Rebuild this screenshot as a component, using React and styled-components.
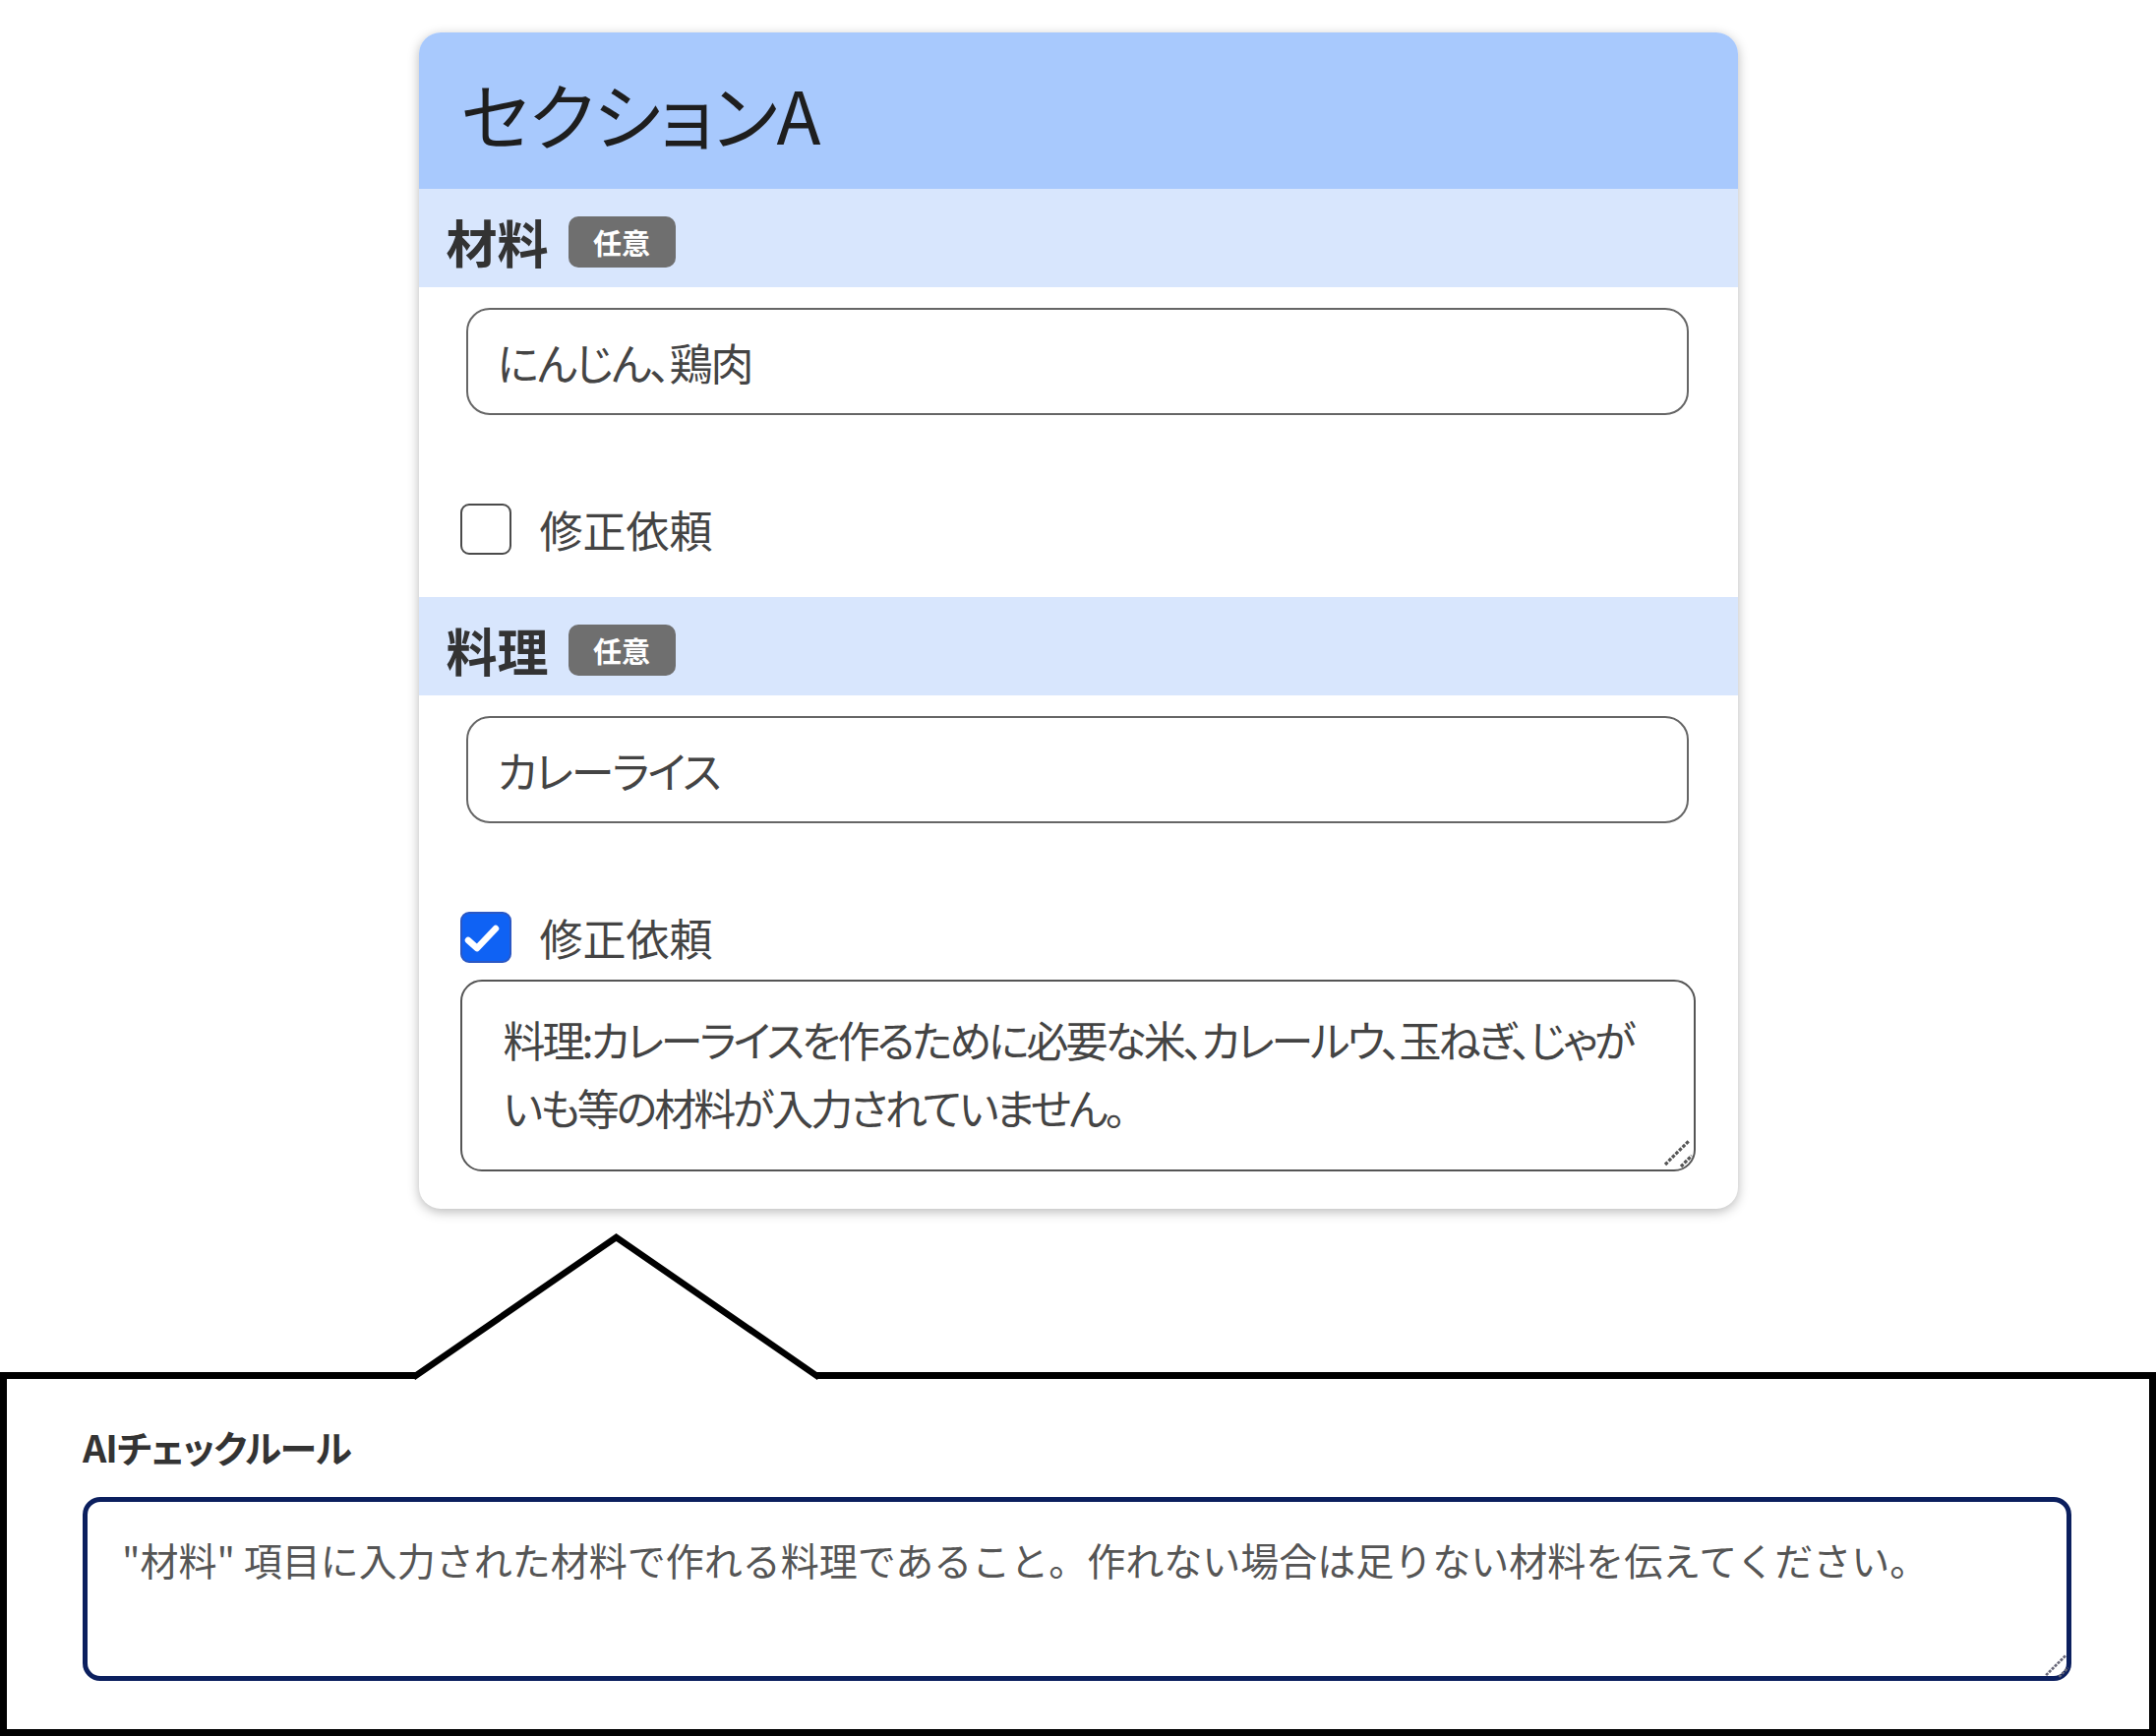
import React, { useState } from "react";
import styled, { createGlobalStyle } from "styled-components";

const GlobalStyle = createGlobalStyle`
  html, body { margin: 0; padding: 0; background: #fff; }
  body {
    font-family: "Noto Sans CJK JP", "Noto Sans", sans-serif;
    color: #333;
    font-feature-settings: "palt";
  }
  *, *::before, *::after { box-sizing: border-box; }
`;

const Page = styled.main`
  width: 2192px;
  min-height: 1765px;
  padding-top: 33px;
  display: flex;
  flex-direction: column;
  align-items: center;
`;

const Card = styled.section`
  width: 1341px;
  background: #fff;
  border-radius: 22px;
  box-shadow: 0 3px 12px rgba(0, 0, 0, 0.28);
  overflow: hidden;
`;

const CardHeader = styled.header`
  height: 159px;
  background: #a8c9fd;
  display: flex;
  align-items: center;
  padding: 4px 0 0 43px;
`;

const Title = styled.h2`
  margin: 0;
  font-size: 74px;
  font-weight: 400;
  color: #1e1e1e;
  line-height: 1;
  letter-spacing: -1px;
`;

const LabelBar = styled.div`
  height: 100px;
  background: #d8e6fd;
  display: flex;
  align-items: center;
  gap: 20px;
  padding: 8px 0 0 28px;
`;

const FieldLabel = styled.span`
  font-size: 52px;
  font-weight: 700;
  color: #333;
  line-height: 1;
`;

const Badge = styled.span`
  display: inline-flex;
  align-items: center;
  justify-content: center;
  height: 52px;
  width: 109px;
  border-radius: 10px;
  background: #6f6f6f;
  color: #fff;
  font-size: 29px;
  font-weight: 700;
  line-height: 1;
`;

const FieldBody = styled.div`
  display: flex;
  flex-direction: column;
  padding: 21px 43px 38px 42px;
`;

const TextInput = styled.input`
  height: 109px;
  margin: 0 7px 0 6px;
  border: 2.5px solid #666;
  border-radius: 24px;
  padding: 0 30px;
  font-family: inherit;
  font-feature-settings: "palt";
  font-size: 44px;
  letter-spacing: -2px;
  color: #444;
  background: #fff;
  outline: none;
`;

const CheckRow = styled.label`
  display: flex;
  align-items: center;
  gap: 29px;
  height: 62px;
  margin-top: 85px;
  font-size: 44px;
  color: #444;
  cursor: pointer;
  user-select: none;
`;

const HiddenInput = styled.input`
  position: absolute;
  opacity: 0;
  width: 0;
  height: 0;
  margin: 0;
`;

const Box = styled.span`
  flex: none;
  width: 52px;
  height: 52px;
  border-radius: 9px;
  border: 2.5px solid ${(p) => (p.$checked ? "#2b58c4" : "#4a4a4a")};
  background: ${(p) => (p.$checked ? "#0f62f4" : "#fff")};
  display: inline-flex;
  align-items: center;
  justify-content: center;
`;

const AreaWrap = styled.div`
  position: relative;
  display: flex;
  margin-top: ${(p) => p.$top || 0}px;
`;

const Grip = styled.svg`
  position: absolute;
  right: 0;
  bottom: 0;
  pointer-events: none;
`;

const NoteArea = styled.textarea`
  height: 195px;
  width: 100%;
  border: 2.5px solid #555;
  border-radius: 22px;
  padding: 24px 60px 0 42px;
  font-family: inherit;
  font-feature-settings: "palt";
  font-size: 43px;
  letter-spacing: -3px;
  line-height: 69px;
  color: #444;
  background: #fff;
  resize: none;
  outline: none;
`;

const Callout = styled.section`
  position: relative;
  align-self: stretch;
  margin-top: 166px;
  border: 7px solid #000;
  padding: 41px 79px 49px 77px;
  background: #fff;
  display: flex;
  flex-direction: column;
  gap: 23px;
`;

const Pointer = styled.svg`
  position: absolute;
  left: 403px;
  top: -152px;
  overflow: visible;
`;

const RuleLabel = styled.div`
  font-size: 38px;
  font-weight: 700;
  color: #333;
  line-height: 56px;
  letter-spacing: -1px;
`;

const RuleArea = styled.textarea`
  height: 187px;
  width: 100%;
  border: 5px solid #0b1f5e;
  border-radius: 18px;
  padding: 30px 35px 0 35px;
  font-family: inherit;
  font-feature-settings: normal;
  font-size: 39px;
  line-height: 57px;
  color: #555;
  background: #fff;
  resize: none;
  outline: none;
`;

function CheckIcon() {
  return (
    <svg width="52" height="52" viewBox="0 0 52 52" style={{ marginLeft: -5, marginTop: -5 }}>
      <polyline
        points="11,31 20,39 39,19"
        fill="none"
        stroke="#fff"
        strokeWidth="6.5"
        strokeLinecap="round"
        strokeLinejoin="round"
      />
    </svg>
  );
}

function ResizeGrip({ size = 36, color = "#555" }) {
  return (
    <Grip width={size} height={size} viewBox="0 0 36 36">
      <line x1="5" y1="29" x2="29" y2="5" stroke={color} strokeWidth="3.2" strokeDasharray="3.5 1.5" />
      <line x1="21" y1="31" x2="32" y2="20" stroke={color} strokeWidth="3.2" strokeDasharray="3.5 1.5" />
    </Grip>
  );
}

function Field({ label, value, note, defaultChecked }) {
  const [checked, setChecked] = useState(defaultChecked);
  return (
    <>
      <LabelBar>
        <FieldLabel>{label}</FieldLabel>
        <Badge>任意</Badge>
      </LabelBar>
      <FieldBody>
        <TextInput defaultValue={value} />
        <CheckRow>
          <HiddenInput
            type="checkbox"
            checked={checked}
            onChange={(e) => setChecked(e.target.checked)}
          />
          <Box $checked={checked}>{checked && <CheckIcon />}</Box>
          修正依頼
        </CheckRow>
        {checked && (
          <AreaWrap $top={12}>
            <NoteArea defaultValue={note} />
            <ResizeGrip />
          </AreaWrap>
        )}
      </FieldBody>
    </>
  );
}

export default function App() {
  return (
    <>
      <GlobalStyle />
      <Page>
        <Card>
          <CardHeader>
            <Title>セクションA</Title>
          </CardHeader>
          <Field label="材料" value="にんじん、鶏肉" defaultChecked={false} note="" />
          <Field
            label="料理"
            value="カレーライス"
            defaultChecked={true}
            note="料理:カレーライスを作るために必要な米、カレールウ、玉ねぎ、じゃがいも等の材料が入力されていません。"
          />
        </Card>
        <Callout>
          <Pointer width="440" height="152" viewBox="0 0 440 152">
            <rect x="13" y="144" width="407" height="8" fill="#fff" />
            <polyline
              points="13,148.5 216.5,8 420,148.5"
              fill="none"
              stroke="#000"
              strokeWidth="6.5"
              strokeLinejoin="miter"
              strokeLinecap="square"
            />
          </Pointer>
          <RuleLabel>AIチェックルール</RuleLabel>
          <AreaWrap>
            <RuleArea defaultValue={'"材料" 項目に入力された材料で作れる料理であること。作れない場合は足りない材料を伝えてください。'} />
            <ResizeGrip size={30} color="#667" />
          </AreaWrap>
        </Callout>
      </Page>
    </>
  );
}
